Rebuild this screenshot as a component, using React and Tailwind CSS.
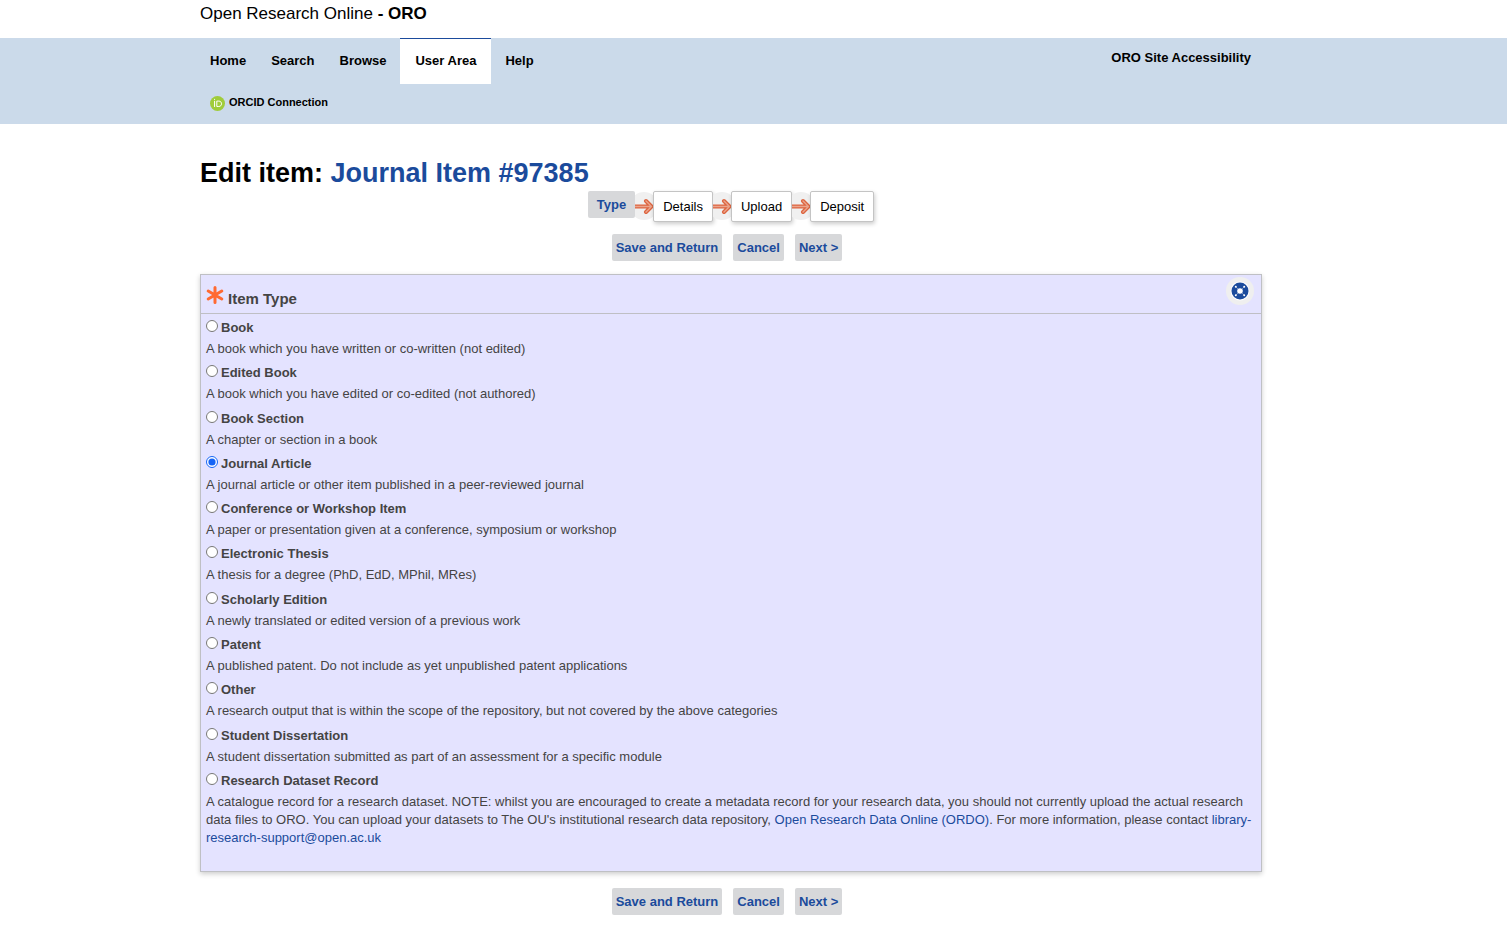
import React, { useState } from 'react';

const NAV = [
  ['Home', 'pr-3 pl-[10px] leading-[46px]'],
  ['Search', 'px-[13px] leading-[46px]'],
  ['Browse', 'pr-[14px] pl-3 leading-[46px]'],
  ['User Area', 'border-t border-[#1b4b9c] bg-white px-[15px] leading-[44px]'],
  ['Help', 'px-[14px] leading-[46px]'],
];

const TYPES = [
  ['book', 'Book', 'A book which you have written or co-written (not edited)'],
  ['edited', 'Edited Book', 'A book which you have edited or co-edited (not authored)'],
  ['section', 'Book Section', 'A chapter or section in a book'],
  ['article', 'Journal Article', 'A journal article or other item published in a peer-reviewed journal'],
  ['conference', 'Conference or Workshop Item', 'A paper or presentation given at a conference, symposium or workshop'],
  ['thesis', 'Electronic Thesis', 'A thesis for a degree (PhD, EdD, MPhil, MRes)'],
  ['scholarly', 'Scholarly Edition', 'A newly translated or edited version of a previous work'],
  ['patent', 'Patent', 'A published patent. Do not include as yet unpublished patent applications'],
  ['other', 'Other', 'A research output that is within the scope of the repository, but not covered by the above categories'],
  ['dissertation', 'Student Dissertation', 'A student dissertation submitted as part of an assessment for a specific module'],
  [
    'dataset',
    'Research Dataset Record',
    <>
      A catalogue record for a research dataset. NOTE: whilst you are encouraged to create a metadata record for your
      research data, you should not currently upload the actual research data files to ORO. You can upload your datasets
      to The OU's institutional research data repository,{' '}
      <a href="#ordo" className="text-[#1b4b9c]">Open Research Data Online (ORDO)</a>. For more information, please
      contact <a href="#contact" className="text-[#1b4b9c]">library-research-support@open.ac.uk</a>
    </>,
  ],
];

function OrcidIcon() {
  return (
    <svg viewBox="0 0 256 256" className="size-[15px]" aria-hidden="true">
      <circle cx="128" cy="128" r="128" fill="#a0cc3a" />
      <g fill="none" stroke="#fff" strokeWidth="17">
        <path d="M78 83v104" />
        <path d="M116 87h34c28 0 47 20 47 46s-19 46-47 46h-34z" />
      </g>
      <circle cx="78" cy="57" r="10" fill="#fff" />
    </svg>
  );
}

function StepArrow() {
  return (
    <svg viewBox="0 0 18 30" className="h-[30px] w-[18px]" aria-hidden="true">
      <circle cx="9" cy="15" r="14" fill="#f0f0f0" />
      <g fill="none" strokeLinecap="round" strokeLinejoin="round">
        <path d="M0 15.500H16M11 10l5.500 5.500-5.500 5.500" stroke="#dd6540" strokeWidth="4" />
        <path d="M0 15.500H16M11 10l5.500 5.500-5.500 5.500" stroke="#eba58d" strokeWidth="1.400" />
      </g>
    </svg>
  );
}

function RequiredIcon() {
  return (
    <svg viewBox="0 0 18 18" className="size-[18px]" role="img" aria-label="Required">
      <path d="M9 1.500v15M2.200 5l13.600 8M2.200 13l13.600-8" stroke="#ff6a32" strokeWidth="3" strokeLinecap="round" fill="none" />
    </svg>
  );
}

function HelpIcon() {
  return (
    <svg viewBox="0 0 28 28" className="size-7" aria-hidden="true">
      <circle cx="14" cy="14" r="14" fill="#efefef" />
      <circle cx="14" cy="14" r="9.500" fill="#fff" />
      <circle cx="14" cy="14" r="8.500" fill="#1b4b9c" />
      <circle cx="14" cy="14" r="2.800" fill="#fff" />
      <g fill="#fff">
        <circle cx="9.800" cy="9.800" r="1" />
        <circle cx="18.200" cy="9.800" r="1" />
        <circle cx="9.800" cy="18.200" r="1" />
        <circle cx="18.200" cy="18.200" r="1" />
      </g>
      <path d="M9.800 9.800l8.400 8.400M18.200 9.800l-8.400 8.400" stroke="#fff" strokeWidth="0.800" opacity="0.500" />
    </svg>
  );
}

function Actions() {
  return (
    <div className="flex justify-center gap-[11px] pr-2">
      {['Save and Return', 'Cancel', 'Next >'].map((label) => (
        <button key={label} type="button" className="h-[27px] rounded-[2px] bg-[#d7d8da] px-1 text-[13px] font-bold text-[#1b4b9c]">
          {label}
        </button>
      ))}
    </div>
  );
}

export default function App() {
  const [type, setType] = useState('article');

  return (
    <div className="min-h-screen bg-white font-['Liberation_Sans',Arial,sans-serif] text-[13px] text-black">
      <header>
        <div className="mx-auto h-[38px] max-w-[1107px] pt-1 text-[17px] leading-5">
          Open Research Online <b>- ORO</b>
        </div>
        <div className="bg-[#cbdaea]">
          <div className="mx-auto flex h-[86px] max-w-[1107px] items-start justify-between pr-14 font-bold">
            <nav>
              <ul className="flex">
                {NAV.map(([item, look]) => (
                  <li key={item}>
                    <a href="#nav" className={`block h-[46px] ${look}`}>
                      {item}
                    </a>
                  </li>
                ))}
              </ul>
              <a href="#orcid" className="mt-[10px] flex items-start gap-1 pl-[10px] text-[11px] leading-4">
                <span className="pt-[2px]">
                  <OrcidIcon />
                </span>
                ORCID Connection
              </a>
            </nav>
            <a href="#accessibility" className="pt-[10px] leading-5">ORO Site Accessibility</a>
          </div>
        </div>
      </header>

      <main className="mx-auto max-w-[1107px] pt-8 pr-[45px] pb-8">
        <h1 className="text-[27px] leading-[35px] font-bold">
          Edit item: <span className="text-[#1b4b9c]">Journal Item #97385</span>
        </h1>

        <div className="flex items-start justify-center">
          <button type="button" className="h-[27px] rounded-[2px] bg-[#d7d8da] px-[9px] font-bold text-[#1b4b9c]">
            Type
          </button>
          {['Details', 'Upload', 'Deposit'].map((step) => (
            <div key={step} className="flex items-start">
              <StepArrow />
              <button type="button" className="h-[31px] rounded-[2px] border border-[#c4c4c4] bg-white px-[9px] shadow-[1px_2px_4px_rgba(0,0,0,0.2)]">
                {step}
              </button>
            </div>
          ))}
        </div>

        <div className="mt-3">
          <Actions />
        </div>

        <section className="mt-[13px] border border-[#bfc0c4] bg-[#e4e3ff] text-[#444] shadow-[0_2px_5px_rgba(0,0,0,0.2)]">
          <div className="flex items-start justify-between border-b border-[#bfbfc4] pt-[2px] pr-[7px] pb-[6px] pl-[5px]">
            <h2 className="flex items-start gap-1 pt-[9px] text-[15px] leading-5 font-bold">
              <RequiredIcon />
              <span id="item-type" className="pt-1 leading-[17px]">Item Type</span>
            </h2>
            <button type="button" aria-label="Show help">
              <HelpIcon />
            </button>
          </div>
          <div
            role="radiogroup"
            aria-labelledby="item-type"
            className="flex min-h-[557px] flex-col justify-between px-[5px] pt-[5px] pb-6"
          >
            {TYPES.map(([id, name, description]) => (
              <div key={id}>
                <div className="flex h-[21px] items-start gap-[3px]">
                  <input
                    type="radio"
                    id={id}
                    name="type"
                    checked={type === id}
                    onChange={() => setType(id)}
                    className="mt-px size-3 accent-[#1464f6]"
                  />
                  <label htmlFor={id} className="leading-[18px] font-bold">{name}</label>
                </div>
                <p className="leading-[18px]">{description}</p>
              </div>
            ))}
          </div>
        </section>

        <div className="mt-4">
          <Actions />
        </div>
      </main>
    </div>
  );
}
